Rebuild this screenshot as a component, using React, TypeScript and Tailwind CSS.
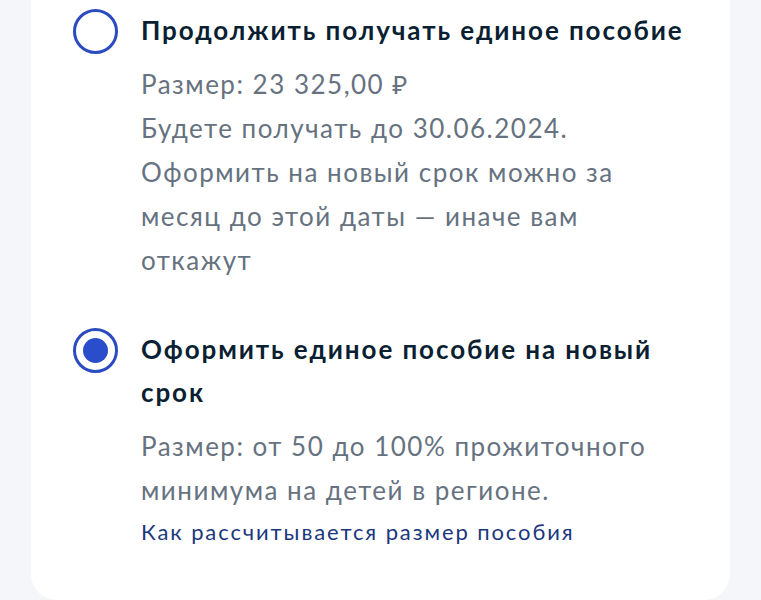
import React, { useState } from 'react';

type Option = {
    id: string;
    title: string[];
    lines: string[];
    link?: string;
};

// lines are split by hand so the wrapping matches the mockup
const options: Option[] = [
    {
        id: 'continue',
        title: ['Продолжить получать единое пособие'],
        lines: [
            'Размер: 23 325,00 ₽',
            'Будете получать до 30.06.2024.',
            'Оформить на новый срок можно за',
            'месяц до этой даты — иначе вам',
            'откажут',
        ],
    },
    {
        id: 'renew',
        title: ['Оформить единое пособие на новый', 'срок'],
        lines: ['Размер: от 50 до 100% прожиточного', 'минимума на детей в регионе.'],
        link: 'Как рассчитывается размер пособия',
    },
];

const Radio = ({ checked }: { checked: boolean }) => (
    <span className="w-[45px] h-[45px] shrink-0 rounded-full border-[3px] border-[#2d4bc0] flex items-center justify-center bg-white">
        {checked && <span className="w-[25px] h-[25px] rounded-full bg-[#2a4dcc]" />}
    </span>
);

export default function App() {
    const [selected, setSelected] = useState('renew');

    return (
        <div className="min-h-[600px] w-full bg-[#f4f6fa] px-[31px] font-['Lato','Noto_Sans',sans-serif]">
            <div className="bg-white rounded-b-[26px] pl-[42px] pr-[20px] pt-[9px] pb-[53px] flex flex-col gap-[46px]">
                {options.map((opt) => (
                    <div key={opt.id} className="flex gap-[23px] cursor-pointer" onClick={() => setSelected(opt.id)}>
                        <div className="h-[44px] flex items-center">
                            <Radio checked={selected === opt.id} />
                        </div>
                        <div className="flex-1 whitespace-nowrap">
                            <div className="mb-[10px]">
                                {opt.title.map((t, i) => (
                                    <p key={i} className="text-[26px] leading-[43px] font-bold tracking-[1.9px] text-[#0b1f33]">
                                        {t}
                                    </p>
                                ))}
                            </div>
                            {opt.lines.map((line, i) => (
                                <p key={i} className="text-[26px] leading-[44px] tracking-[1.5px] text-[#66727f]">
                                    {line}
                                </p>
                            ))}
                            {opt.link && (
                                <a className="block mt-[5px] text-[22px] leading-[30px] tracking-[1.9px] text-[#1b3780]">{opt.link}</a>
                            )}
                        </div>
                    </div>
                ))}
            </div>
        </div>
    );
}
